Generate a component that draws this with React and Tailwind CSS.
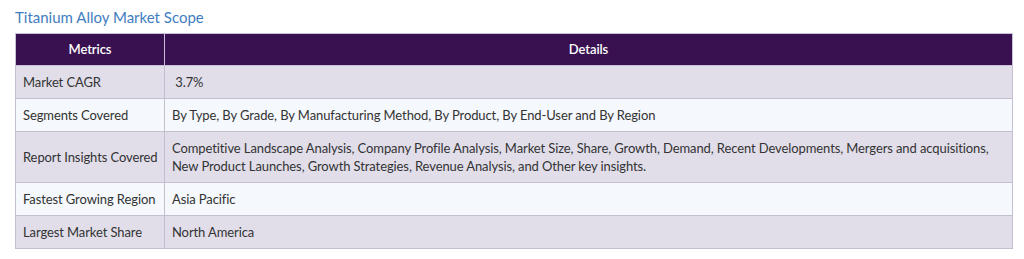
const rows = [
    { metric: "Market CAGR", details: "\u00a03.7%" },
    { metric: "Segments Covered", details: "By Type, By Grade, By Manufacturing Method, By Product, By End-User and By Region" },
    {
        metric: "Report Insights Covered",
        details: "Competitive Landscape Analysis, Company Profile Analysis, Market Size, Share, Growth, Demand, Recent Developments, Mergers and acquisitions, New Product Launches, Growth Strategies, Revenue Analysis, and Other key insights.",
    },
    { metric: "Fastest Growing Region", details: "Asia Pacific" },
    { metric: "Largest Market Share", details: "North America" },
]

export default function App() {
    return (
        <div className="w-[1024px] h-[259px] bg-white px-[15px] pt-[7px] font-['Lato','Open_Sans',sans-serif]">
            <h2 className="text-[15px] leading-[20px] text-[#3f7dc1] font-normal mb-[6px]">Titanium Alloy Market Scope</h2>
            <table className="w-[998px] table-fixed border-collapse text-[13px] tracking-[-0.1px] text-[#333]">
                <thead>
                    <tr className="bg-[#3a1150] text-white h-[32px]">
                        <th className="w-[149px] border border-[#c9bfd6] font-semibold text-center">Metrics</th>
                        <th className="border border-[#c9bfd6] font-semibold text-center">Details</th>
                    </tr>
                </thead>
                <tbody>
                    {rows.map((row, i) => (
                        <tr key={row.metric} className={i % 2 === 0 ? "bg-[#e1deea]" : "bg-[#f5f8fc]"}>
                            <td className="border border-[#c4bfcf] px-[7px] py-[7px] leading-[18px] align-middle whitespace-nowrap">{row.metric}</td>
                            <td className="border border-[#c4bfcf] px-[7px] py-[7px] leading-[18px] align-middle">{row.details}</td>
                        </tr>
                    ))}
                </tbody>
            </table>
        </div>
    )
}
